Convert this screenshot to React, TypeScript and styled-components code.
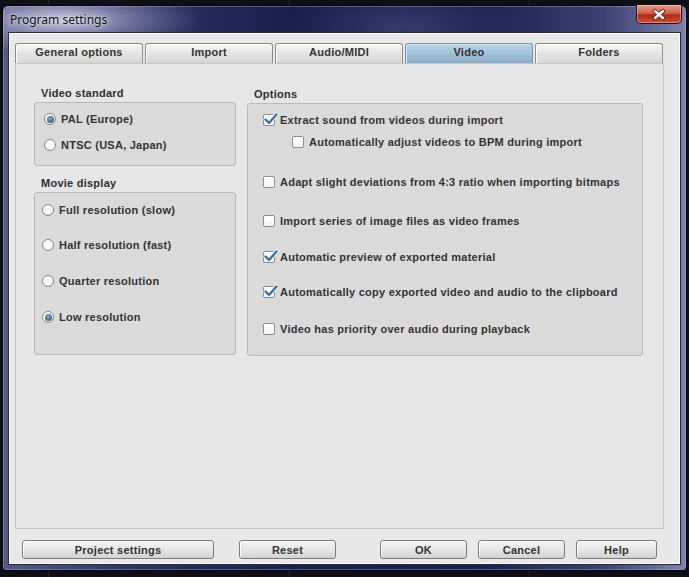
import React from "react";
import styled, { createGlobalStyle, css } from "styled-components";

const Global = createGlobalStyle`
  html, body { margin: 0; padding: 0; }
  body {
    width: 689px; height: 577px; overflow: hidden;
    background: #101119;
    font-family: "Liberation Sans", Arial, sans-serif;
  }
  #root { width: 689px; height: 577px; }
`;

const Screen = styled.div`
  width: 689px;
  height: 577px;
  box-sizing: border-box;
  padding: 5px 2px 6px 2px;
  background:
    linear-gradient(to right, transparent 0 48px, rgba(60,62,80,.5) 48px 49px, transparent 49px 289px, rgba(60,62,80,.5) 289px 290px, transparent 290px 529px, rgba(60,62,80,.5) 529px 530px, transparent 530px),
    #0e0f17;
`;

const Window = styled.div`
  height: 100%;
  box-sizing: border-box;
  display: flex;
  flex-direction: column;
  border: 1px solid #05060c;
  border-radius: 6px 6px 4px 4px;
  background:
    radial-gradient(ellipse 140px 34px at 60px 14px, rgba(220,222,240,.85) 0%, rgba(170,172,205,.55) 45%, transparent 100%),
    radial-gradient(ellipse 120px 40px at 400px 20px, rgba(70,75,130,.6) 0%, transparent 100%),
    linear-gradient(to right, #565985 0%, #2c2f62 20%, #1a1c4a 45%, #1d1f50 70%, #3d4074 88%, #7f82aa 100%);
  box-shadow: inset 0 0 0 1px rgba(200,202,230,.35);
`;

const TitleBar = styled.div`
  height: 26px;
  flex: none;
  display: flex;
  align-items: flex-start;
  justify-content: space-between;
  padding: 0 4px 0 7px;
`;

const Title = styled.div`
  font-family: "Noto Sans", "Open Sans", sans-serif;
  font-size: 12px;
  color: #101018;
  margin-top: 5px;
  text-shadow: 0 0 6px rgba(255,255,255,.8), 0 0 2px rgba(255,255,255,.6);
`;

const CloseButton = styled.div`
  width: 46px;
  height: 19px;
  margin-top: -1px;
  box-sizing: border-box;
  border: 1px solid #3a0c08;
  border-top: none;
  border-radius: 0 0 5px 5px;
  background: linear-gradient(to bottom, #e4a08e 0%, #d0624a 45%, #b42a16 55%, #c8503a 100%);
  box-shadow: inset 0 0 0 1px rgba(255,220,210,.45);
  display: flex;
  align-items: center;
  justify-content: center;
`;

const Client = styled.div`
  flex: 1;
  margin: 0 5px 5px 5px;
  border: 1px solid #2a2b40;
  box-shadow: inset 0 0 0 1px #fbfbfb;
  background: #e8e8e8;
  display: flex;
  flex-direction: column;
  padding: 10px 16px 5px 6px;
`;

const TabRow = styled.div`
  display: flex;
  gap: 2px;
  height: 20px;
`;

const Tab = styled.div<{ $active?: boolean }>`
  width: 128px;
  box-sizing: border-box;
  border: 1px solid #8c8c8c;
  border-bottom: none;
  border-radius: 3px 3px 0 0;
  display: flex;
  align-items: center;
  justify-content: center;
  padding-bottom: 3px;
  font-size: 11px;
  font-weight: bold;
  letter-spacing: 0.25px;
  color: #333;
  background: linear-gradient(to bottom, #f6f6f6 0%, #e4e4e4 50%, #d6d6d6 100%);
  box-shadow: inset 1px 1px 0 #ffffff;
  ${(p) =>
    p.$active &&
    css`
      background: linear-gradient(to bottom, #b9d3e4 0%, #a2c0d6 50%, #8daec6 100%);
      box-shadow: inset 1px 1px 0 #d4e6f2;
      border-color: #7e94a6;
    `}
`;

const TabPanel = styled.div`
  flex: 1;
  border: 1px solid #c6c6c6;
  background: #e6e6e6;
  padding: 22px 21px 0 18px;
  display: grid;
  grid-template-columns: 202px 396px;
  column-gap: 11px;
  align-items: start;
`;

const Column = styled.div`
  display: flex;
  flex-direction: column;
`;

const GroupLabel = styled.div<{ $top?: number }>`
  font-size: 11px;
  font-weight: bold;
  letter-spacing: 0.25px;
  color: #2e2e2e;
  line-height: 14px;
  padding-left: 7px;
  margin-top: ${(p) => p.$top ?? 0}px;
  margin-bottom: 2px;
`;

const GroupBox = styled.div<{ $h: number; $pad: string }>`
  height: ${(p) => p.$h}px;
  box-sizing: border-box;
  border: 1px solid #b9b9b9;
  border-radius: 3px;
  background: #dadada;
  padding: ${(p) => p.$pad};
  display: flex;
  flex-direction: column;
`;

const OptionRow = styled.label<{ $h: number; $indent?: number; $space?: number }>`
  height: ${(p) => p.$h}px;
  flex: none;
  display: flex;
  align-items: center;
  gap: 5px;
  padding-left: ${(p) => p.$indent ?? 0}px;
  margin-top: ${(p) => p.$space ?? 0}px;
  font-size: 11px;
  font-weight: bold;
  letter-spacing: 0.25px;
  color: #333;
`;

const RadioDot = styled.span<{ $on?: boolean }>`
  width: 12px;
  height: 12px;
  flex: none;
  box-sizing: border-box;
  border-radius: 50%;
  border: 1px solid #8a8a8a;
  background: radial-gradient(circle at 50% 40%, #ffffff 0%, #f4f4f4 60%, #dcdcdc 100%);
  display: flex;
  align-items: center;
  justify-content: center;
  &::after {
    content: "";
    display: ${(p) => (p.$on ? "block" : "none")};
    width: 7px;
    height: 7px;
    border-radius: 50%;
    background: radial-gradient(circle at 45% 40%, #8fb0c6 0%, #4f6f86 55%, #2f4b60 100%);
  }
`;

const CheckWrap = styled.span`
  position: relative;
  width: 12px;
  height: 12px;
  flex: none;
`;

const CheckBox = styled.span`
  display: block;
  width: 12px;
  height: 12px;
  box-sizing: border-box;
  border: 1px solid #8e8e8e;
  border-radius: 2px;
  background: linear-gradient(to bottom, #ffffff 0%, #f2f2f2 100%);
`;

const CheckMark = styled.svg`
  position: absolute;
  left: 0px;
  top: -2px;
  width: 15px;
  height: 14px;
  overflow: visible;
`;

const ButtonRow = styled.div`
  display: flex;
  height: 19px;
  margin-top: 11px;
  padding-left: 7px;
`;

const Button = styled.div<{ $w: number; $ml?: number }>`
  width: ${(p) => p.$w}px;
  margin-left: ${(p) => p.$ml ?? 0}px;
  box-sizing: border-box;
  border: 1px solid #7c7c7c;
  border-radius: 3px;
  background: linear-gradient(to bottom, #f4f4f4 0%, #e6e6e6 50%, #d2d2d2 100%);
  box-shadow: inset 1px 1px 0 #fff;
  display: flex;
  align-items: center;
  justify-content: center;
  font-size: 11px;
  font-weight: bold;
  letter-spacing: 0.25px;
  color: #333;
`;

const Radio = ({ on, label }: { on?: boolean; label: string }) => (
  <>
    <RadioDot $on={on} />
    <span>{label}</span>
  </>
);

const Check = ({ on }: { on?: boolean }) => (
  <CheckWrap>
    <CheckBox />
    {on && (
      <CheckMark viewBox="0 0 15 14">
        <path d="M2.5 7.5 L6 11 L13.5 2.5" fill="none" stroke="#ffffff" strokeWidth="4" strokeLinecap="round" strokeLinejoin="round" />
        <path d="M2.5 7.5 L6 11 L13.5 2.5" fill="none" stroke="#3f6f94" strokeWidth="2.4" strokeLinecap="round" strokeLinejoin="round" />
      </CheckMark>
    )}
  </CheckWrap>
);

export default function App() {
  return (
    <>
      <Global />
      <Screen>
        <Window>
          <TitleBar>
            <Title>Program settings</Title>
            <CloseButton>
              <svg width="14" height="11" viewBox="0 0 14 11">
                <path d="M3 2 L11 9 M11 2 L3 9" stroke="#5a1a10" strokeWidth="4" strokeLinecap="round" />
                <path d="M3 2 L11 9 M11 2 L3 9" stroke="#ffffff" strokeWidth="2.4" strokeLinecap="round" />
              </svg>
            </CloseButton>
          </TitleBar>
          <Client>
            <TabRow>
              <Tab>General options</Tab>
              <Tab>Import</Tab>
              <Tab>Audio/MIDI</Tab>
              <Tab $active>Video</Tab>
              <Tab>Folders</Tab>
            </TabRow>
            <TabPanel>
              <Column>
                <GroupLabel>Video standard</GroupLabel>
                <GroupBox $h={64} $pad="3px 0 0 9px">
                  <OptionRow $h={26}>
                    <Radio on label="PAL (Europe)" />
                  </OptionRow>
                  <OptionRow $h={26}>
                    <Radio label="NTSC (USA, Japan)" />
                  </OptionRow>
                </GroupBox>
                <GroupLabel $top={10}>Movie display</GroupLabel>
                <GroupBox $h={163} $pad="0 0 0 7px">
                  <OptionRow $h={34}>
                    <Radio label="Full resolution (slow)" />
                  </OptionRow>
                  <OptionRow $h={36}>
                    <Radio label="Half resolution (fast)" />
                  </OptionRow>
                  <OptionRow $h={36}>
                    <Radio label="Quarter resolution" />
                  </OptionRow>
                  <OptionRow $h={36}>
                    <Radio on label="Low resolution" />
                  </OptionRow>
                </GroupBox>
              </Column>
              <Column>
                <GroupLabel $top={1}>Options</GroupLabel>
                <GroupBox $h={253} $pad="5px 0 0 15px">
                  <OptionRow $h={22}>
                    <Check on />
                    <span>Extract sound from videos during import</span>
                  </OptionRow>
                  <OptionRow $h={22} $indent={29}>
                    <Check />
                    <span>Automatically adjust videos to BPM during import</span>
                  </OptionRow>
                  <OptionRow $h={22} $space={18}>
                    <Check />
                    <span>Adapt slight deviations from 4:3 ratio when importing bitmaps</span>
                  </OptionRow>
                  <OptionRow $h={22} $space={17}>
                    <Check />
                    <span>Import series of image files as video frames</span>
                  </OptionRow>
                  <OptionRow $h={22} $space={14}>
                    <Check on />
                    <span>Automatic preview of exported material</span>
                  </OptionRow>
                  <OptionRow $h={22} $space={13}>
                    <Check on />
                    <span>Automatically copy exported video and audio to the clipboard</span>
                  </OptionRow>
                  <OptionRow $h={22} $space={15}>
                    <Check />
                    <span>Video has priority over audio during playback</span>
                  </OptionRow>
                </GroupBox>
              </Column>
            </TabPanel>
            <ButtonRow>
              <Button $w={192}>Project settings</Button>
              <Button $w={97} $ml={25}>Reset</Button>
              <Button $w={87} $ml={44}>OK</Button>
              <Button $w={87} $ml={11}>Cancel</Button>
              <Button $w={81} $ml={11}>Help</Button>
            </ButtonRow>
          </Client>
        </Window>
      </Screen>
    </>
  );
}
